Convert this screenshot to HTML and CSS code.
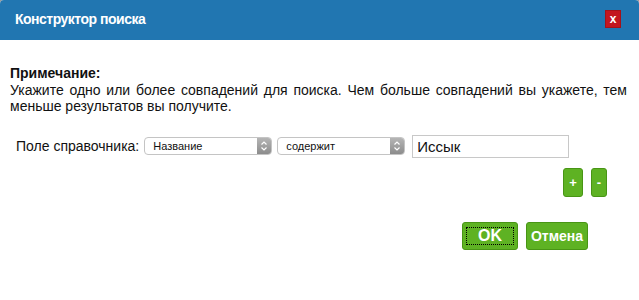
FILE: index.html
```html
<!DOCTYPE html>
<html lang="ru">
<head>
  <meta charset="UTF-8" />
  <title>Конструктор поиска</title>
  <link rel="stylesheet" href="styles.css">
</head>
<body>
  <div class="dialog">
    <div class="titlebar">
      <span class="title">Конструктор поиска</span>
      <button class="close">x</button>
    </div>

    <div class="content">
      <div class="note">
        <b>Примечание:</b><br>
        Укажите одно или более совпадений для поиска. Чем больше совпадений вы укажете, тем меньше результатов вы получите.
      </div>

      <div class="criteria">
        <span class="label">Поле справочника:</span>
        <div class="select">
          <span class="value">Название</span>
          <span class="arrows">
            <svg width="8" height="12" viewBox="0 0 8 12"><path d="M1.5 4.5 L4 2 L6.5 4.5 M1.5 7.5 L4 10 L6.5 7.5" fill="none" stroke="#fff" stroke-width="1.2"/></svg>
          </span>
        </div>
        <div class="select">
          <span class="value">содержит</span>
          <span class="arrows">
            <svg width="8" height="12" viewBox="0 0 8 12"><path d="M1.5 4.5 L4 2 L6.5 4.5 M1.5 7.5 L4 10 L6.5 7.5" fill="none" stroke="#fff" stroke-width="1.2"/></svg>
          </span>
        </div>
        <input type="text" class="term" value="Иссык" />
      </div>

      <div class="row-actions">
        <button class="btn small plus">+</button>
        <button class="btn small minus">-</button>
      </div>

      <div class="footer">
        <button class="btn ok"><span class="focus">OK</span></button>
        <button class="btn cancel">Отмена</button>
      </div>
    </div>
  </div>
</body>
</html>
```

FILE: styles.css
```css
body {
  margin: 0;
  background: #9a9a9a;
  font-family: "Liberation Sans", Arial, sans-serif;
}
.dialog {
  width: 639px;
  height: 300px;
  background: #fff;
  border-radius: 4px 4px 0 0;
  overflow: hidden;
}
.titlebar {
  height: 40px;
  background: #2176b1;
  display: flex;
  align-items: center;
  justify-content: space-between;
  padding: 0 18px 0 15px;
}
.title {
  color: #fff;
  font-size: 14px;
  font-weight: bold;
  letter-spacing: -0.5px;
  margin-top: -2px;
}
.close {
  width: 16px;
  height: 18px;
  padding: 0;
  margin-top: -2px;
  border: 1px solid #a3121a;
  background: #c3161f;
  color: #fff;
  font-family: "Liberation Sans", Arial, sans-serif;
  font-size: 12px;
  font-weight: bold;
  line-height: 14px;
}
.content {
  padding: 25px 12px 0 10px;
}
.note {
  font-size: 14px;
  line-height: 16.5px;
  text-align: justify;
  color: #111;
}
.criteria {
  display: flex;
  align-items: center;
  margin-top: 20px;
  padding-left: 6px;
}
.label {
  font-size: 14px;
  color: #111;
  margin-right: 5px;
}
.select {
  width: 126px;
  height: 16px;
  border: 1px solid #c4c4c4;
  border-radius: 4px;
  display: flex;
  align-items: center;
  justify-content: space-between;
  margin-right: 5px;
  overflow: hidden;
}
.select + .select {
  margin-right: 7px;
}
.value {
  font-size: 11px;
  padding-left: 8px;
  color: #111;
}
.arrows {
  width: 14px;
  height: 16px;
  background: linear-gradient(#b5b5b5, #8c8c8c);
  display: flex;
  align-items: center;
  justify-content: center;
}
.term {
  width: 147px;
  height: 21px;
  border: 1px solid #c8c8c8;
  padding: 0 4px;
  font-family: "Liberation Sans", Arial, sans-serif;
  font-size: 15px;
  color: #111;
  margin: 0;
}
.btn {
  background: #5eb223;
  border: 1px solid #489515;
  border-radius: 3px;
  color: #fff;
  font-family: "Liberation Sans", Arial, sans-serif;
  font-weight: bold;
  padding: 0;
}
.row-actions {
  display: flex;
  justify-content: flex-end;
  gap: 8px;
  margin-top: 10px;
  padding-right: 20px;
}
.small {
  height: 29px;
  font-size: 13px;
}
.plus {
  width: 20px;
}
.minus {
  width: 16px;
}
.footer {
  display: flex;
  justify-content: flex-end;
  gap: 8px;
  margin-top: 25px;
  padding-right: 39px;
}
.ok {
  width: 56px;
  height: 28px;
  font-size: 16px;
  display: flex;
  align-items: center;
  justify-content: center;
}
.focus {
  display: block;
  width: 46px;
  line-height: 16px;
  outline: 1px dotted #000;
}
.cancel {
  width: 62px;
  height: 28px;
  font-size: 14px;
}
```
